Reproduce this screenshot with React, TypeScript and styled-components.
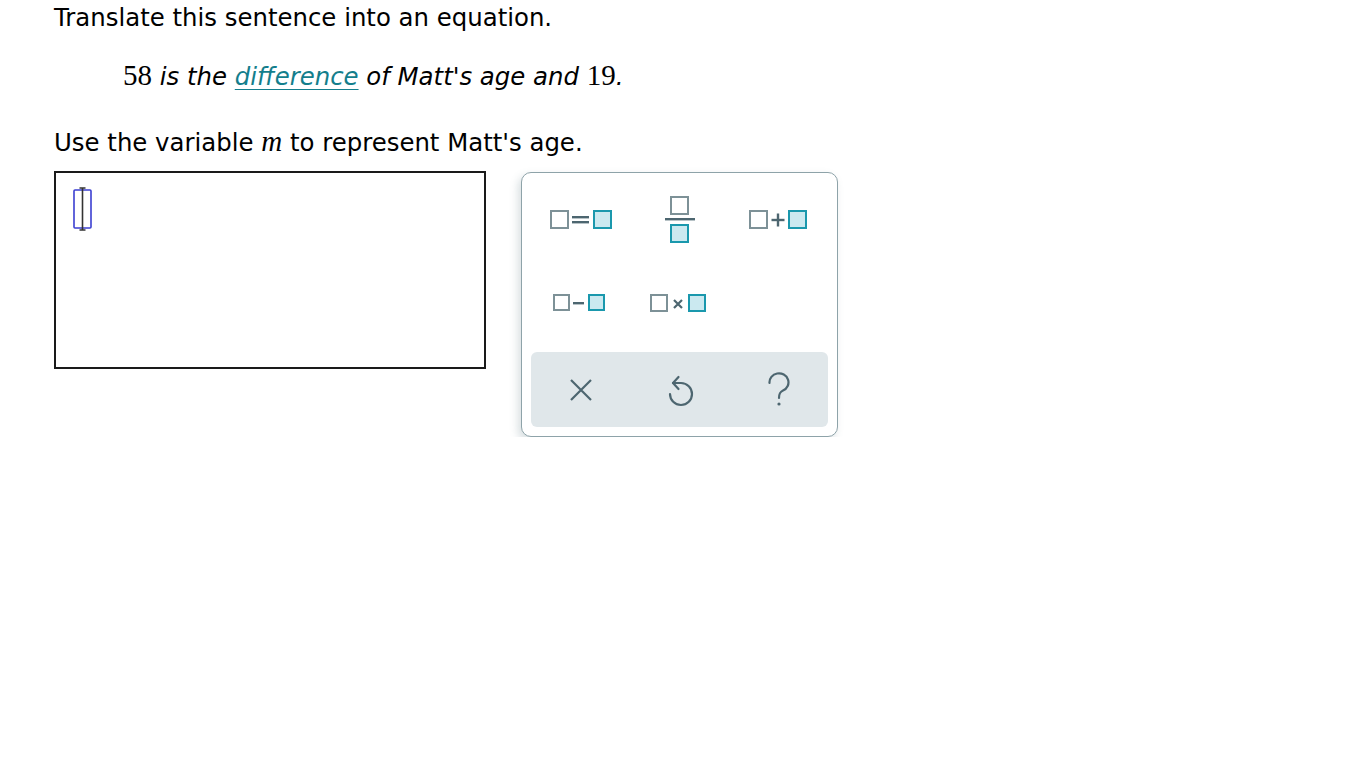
import React from 'react';
import styled, { createGlobalStyle } from 'styled-components';

const GlobalStyle = createGlobalStyle`
  html, body {
    margin: 0;
    padding: 0;
    background: #fff;
  }
  body {
    font-family: 'DejaVu Sans', Verdana, sans-serif;
    color: #000;
  }
`;

const Page = styled.div`
  padding: 3px 0 0 54px;
`;

const Prompt = styled.p`
  margin: 0;
  font-size: 24.4px;
  line-height: 30px;
  white-space: nowrap;
`;

const Sentence = styled(Prompt)`
  margin: 29px 0 0 69px;
  font-style: italic;
`;

const Num = styled.span`
  font-family: 'Liberation Serif', 'Times New Roman', serif;
  font-style: normal;
  font-size: 29px;
  line-height: 20px;
`;

const Term = styled.span`
  color: #147e8c;
  text-decoration: underline;
  text-decoration-thickness: 1px;
  text-underline-offset: 4px;
`;

const Instruction = styled(Prompt)`
  margin-top: 36px;
`;

const Var = styled.span`
  font-family: 'Liberation Serif', 'Times New Roman', serif;
  font-style: italic;
  font-size: 29px;
  line-height: 20px;
`;

const Workspace = styled.div`
  display: flex;
  align-items: flex-start;
  gap: 35px;
  margin-top: 13px;
`;

const AnswerBox = styled.div`
  width: 432px;
  height: 198px;
  box-sizing: border-box;
  border: 2px solid #1a1a1a;
  padding: 13px 0 0 16px;
`;

const Keypad = styled.div`
  width: 317px;
  height: 265px;
  margin-top: 1px;
  box-sizing: border-box;
  border: 1.5px solid #8ea3a9;
  border-radius: 10px;
  background: #fff;
  box-shadow: -3px 4px 8px rgba(90, 120, 130, 0.24);
  padding: 4px 9px 9px 9px;
  display: flex;
  flex-direction: column;
`;

const KeyGrid = styled.div`
  display: grid;
  grid-template-columns: repeat(3, 1fr);
  grid-auto-rows: 84px;
`;

const Key = styled.button`
  border: none;
  background: transparent;
  padding: 0;
  display: flex;
  align-items: center;
  justify-content: center;
  cursor: pointer;
`;

const ActionBar = styled.div`
  margin-top: 7px;
  height: 76px;
  border-radius: 6px;
  background: #e0e7ea;
  display: grid;
  grid-template-columns: repeat(3, 1fr);
`;

const GRAY = '#7d9197';
const TEAL = '#1a98ad';
const FILL = '#cbe9f0';
const OP = '#4d6670';

const Box = ({ x, y, s = 16, active }: { x: number; y: number; s?: number; active?: boolean }) => (
  <rect
    x={x}
    y={y}
    width={s}
    height={s}
    fill={active ? FILL : '#fff'}
    stroke={active ? TEAL : GRAY}
    strokeWidth={2}
  />
);

const EqualsIcon = () => (
  <svg width="64" height="22" viewBox="0 0 64 22">
    <Box x={2} y={3} s={17} />
    <rect x={23} y={8} width={17} height={2.4} fill={OP} />
    <rect x={23} y={13} width={17} height={2.4} fill={OP} />
    <Box x={45} y={3} s={17} active />
  </svg>
);

const FracIcon = () => (
  <svg width="34" height="50" viewBox="0 0 34 50">
    <Box x={8} y={3} s={17} />
    <rect x={2} y={24} width={30} height={2.4} fill={OP} />
    <Box x={8} y={31} s={17} active />
  </svg>
);

const PlusIcon = () => (
  <svg width="62" height="22" viewBox="0 0 62 22">
    <Box x={2} y={3} s={17} />
    <rect x={23.5} y={10.8} width={13} height={2.4} fill={OP} />
    <rect x={28.8} y={5.5} width={2.4} height={13} fill={OP} />
    <Box x={41} y={3} s={17} active />
  </svg>
);

const MinusIcon = () => (
  <svg width="58" height="22" viewBox="0 0 58 22">
    <Box x={2} y={3} s={15} />
    <rect x={21} y={10} width={11} height={2.4} fill={OP} />
    <Box x={37} y={3} s={15} active />
  </svg>
);

const TimesIcon = () => (
  <svg width="62" height="22" viewBox="0 0 62 22">
    <Box x={2} y={3} s={16} />
    <path d="M25 8 L33 16 M33 8 L25 16" stroke={OP} strokeWidth={2.2} />
    <Box x={40} y={3} s={16} active />
  </svg>
);

const ClearIcon = () => (
  <svg width="26" height="26" viewBox="0 0 26 26">
    <path d="M3 3 L23 23 M23 3 L3 23" stroke={OP} strokeWidth={2.2} />
  </svg>
);

const UndoIcon = () => (
  <svg width="30" height="36" viewBox="0 0 30 36">
    <path
      d="M8 11 L16 11 A11 11 0 1 1 5 22"
      fill="none"
      stroke={OP}
      strokeWidth={2.2}
      strokeLinecap="round"
    />
    <path d="M13.5 5 L8 11 L13.5 17" fill="none" stroke={OP} strokeWidth={2.2} strokeLinecap="round" strokeLinejoin="round" />
  </svg>
);

const HelpIcon = () => (
  <svg width="24" height="36" viewBox="0 0 24 36">
    <path
      d="M2.5 11 A9.5 9 0 1 1 16 18.5 C13 20 12 21.5 12 26"
      fill="none"
      stroke={OP}
      strokeWidth={2.2}
      strokeLinecap="round"
    />
    <circle cx={12} cy={32} r={1.6} fill={OP} />
  </svg>
);

const Caret = () => (
  <svg width="22" height="46" viewBox="0 0 22 46">
    <rect x={2} y={4} width={17} height={38} fill="none" stroke="#3b3fd1" strokeWidth={1.6} rx={1} />
    <path d="M10.5 2 L10.5 44" stroke="#333" strokeWidth={1.6} />
    <path d="M7.5 2 L13.5 2 M7.5 44 L13.5 44" stroke="#333" strokeWidth={1.4} />
  </svg>
);

export default function App() {
  return (
    <>
      <GlobalStyle />
      <Page>
        <Prompt>Translate this sentence into an equation.</Prompt>
        <Sentence>
          <Num>58</Num> is the <Term>difference</Term> of Matt's age and <Num>19</Num>.
        </Sentence>
        <Instruction>
          Use the variable <Var>m</Var> to represent Matt's age.
        </Instruction>
        <Workspace>
          <AnswerBox>
            <Caret />
          </AnswerBox>
          <Keypad>
            <KeyGrid>
              <Key aria-label="equals"><EqualsIcon /></Key>
              <Key aria-label="fraction"><FracIcon /></Key>
              <Key aria-label="plus"><PlusIcon /></Key>
              <Key aria-label="minus"><MinusIcon /></Key>
              <Key aria-label="times"><TimesIcon /></Key>
            </KeyGrid>
            <ActionBar>
              <Key aria-label="clear"><ClearIcon /></Key>
              <Key aria-label="undo"><UndoIcon /></Key>
              <Key aria-label="help"><HelpIcon /></Key>
            </ActionBar>
          </Keypad>
        </Workspace>
      </Page>
    </>
  );
}
